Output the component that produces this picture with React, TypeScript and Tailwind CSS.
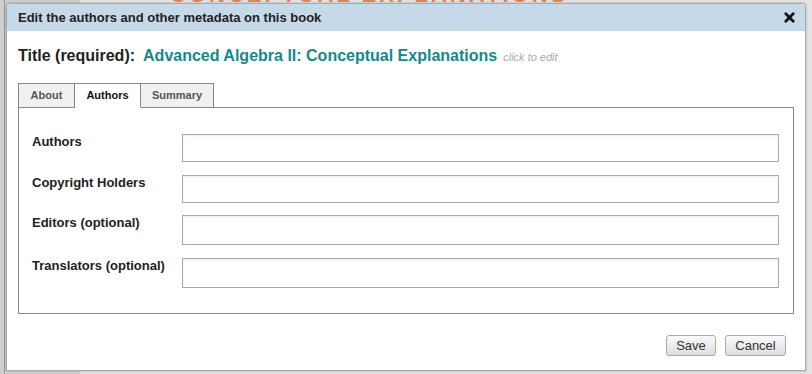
import React from "react";

const Field = ({ label, mt, h }: { label: string; mt: string; h: string }) => (
  <div className={`flex items-start ${mt}`}>
    <div className="w-[150px] pt-0 text-[13px] font-bold text-[#222] leading-[16px]">{label}</div>
    <div
      className={`w-[597px] ${h} border border-[#aaa] bg-white shadow-[inset_0_1px_2px_rgba(0,0,0,0.08)]`}
    />
  </div>
);

export default function App() {
  return (
    <div
      className="relative w-[812px] h-[374px] overflow-hidden bg-[#cfcfcf]"
      style={{ fontFamily: '"Liberation Sans", Arial, sans-serif' }}
    >
      {/* background page behind dialog */}
      <div className="absolute left-[80px] top-0 w-[732px] h-[374px] bg-[#e4e4e4]" />
      <div className="absolute left-[4px] top-0 w-[1px] h-[374px] bg-[#9a9a9a]" />
      <div className="absolute left-[170px] top-0 h-[3px] overflow-hidden">
        <div className="mt-[-15px] text-[22px] leading-[20px] font-bold text-[#e0885a] tracking-[3px] whitespace-nowrap">
          CONCEPTUAL EXPLANATIONS
        </div>
      </div>

      {/* dialog */}
      <div className="absolute left-[6px] top-[3px] w-[800px] h-[368px] bg-white border border-[#aaa] rounded-t-[4px] shadow-[0_0_3px_rgba(0,0,0,0.25)] flex flex-col">
        <div className="h-[27px] bg-[#c5d9e8] rounded-t-[4px] flex items-center justify-between pl-[11px] pr-[10px]">
          <span className="text-[13px] font-bold text-[#222]">
            Edit the authors and other metadata on this book
          </span>
          <svg width="11" height="11" viewBox="0 0 11 11">
            <path d="M1.8 1.8 L9.2 9.2 M9.2 1.8 L1.8 9.2" stroke="#111" strokeWidth="2.8" strokeLinecap="round" />
          </svg>
        </div>

        <div className="px-[11px] flex flex-col">
          <div className="flex items-baseline mt-[13px] h-[20px]">
            <span className="text-[16px] font-bold text-[#222]">Title (required):</span>
            <span className="ml-[8px] text-[16px] font-bold text-[#15898a]">
              Advanced Algebra II: Conceptual Explanations
            </span>
            <span className="ml-[6px] text-[11px] italic text-[#aaa]">click to edit</span>
          </div>

          <div className="flex mt-[19px] h-[25px] relative z-10">
            <div className="w-[57px] h-[25px] border border-[#888] bg-[#f0f0f0] text-[11px] font-bold text-[#555] flex items-center justify-center">
              About
            </div>
            <div className="w-[66px] h-[25px] border border-l-0 border-[#888] border-b-white bg-white text-[11px] font-bold text-[#111] flex items-center justify-center">
              Authors
            </div>
            <div className="w-[73px] h-[25px] border border-l-0 border-[#888] bg-[#f0f0f0] text-[11px] font-bold text-[#555] flex items-center justify-center">
              Summary
            </div>
          </div>

          <div className="mt-[-1px] w-[776px] h-[207px] border border-[#888] pl-[13px] pt-[26px]">
            <Field label="Authors" mt="mt-0" h="h-[28px]" />
            <Field label="Copyright Holders" mt="mt-[13px]" h="h-[28px]" />
            <Field label="Editors (optional)" mt="mt-[12px]" h="h-[30px]" />
            <Field label="Translators (optional)" mt="mt-[13px]" h="h-[30px]" />
          </div>

          <div className="flex justify-end gap-[9px] mt-[21px] pr-[8px]">
            <button className="w-[50px] h-[21px] rounded-[3px] border border-[#aaa] bg-gradient-to-b from-[#fafafa] to-[#dedede] text-[13px] text-[#333] leading-none">
              Save
            </button>
            <button className="w-[61px] h-[21px] rounded-[3px] border border-[#aaa] bg-gradient-to-b from-[#fafafa] to-[#dedede] text-[13px] text-[#333] leading-none">
              Cancel
            </button>
          </div>
        </div>
      </div>
    </div>
  );
}
